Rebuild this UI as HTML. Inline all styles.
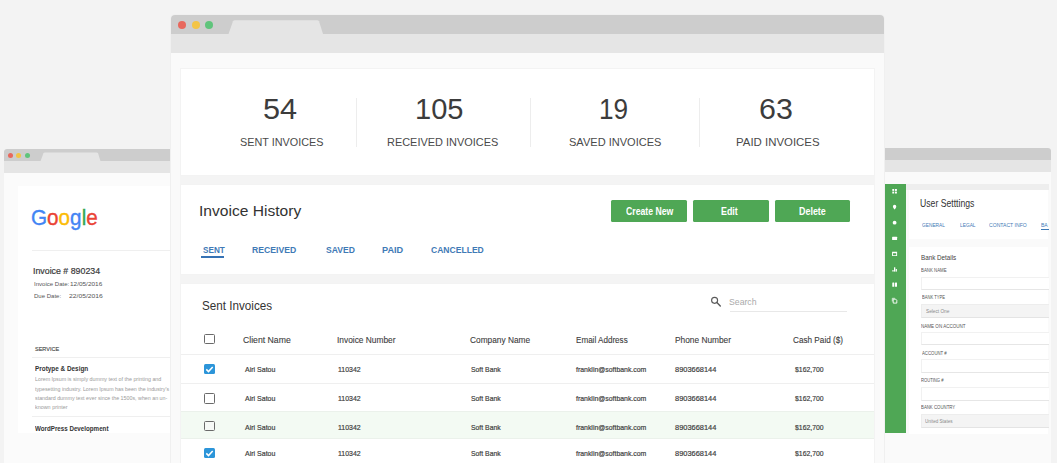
<!DOCTYPE html>
<html lang="en">
<head>
<meta charset="utf-8">
<title>Invoice History</title>
<style>
html,body{margin:0;padding:0}
body{width:1057px;height:463px;overflow:hidden;background:#f3f3f3;position:relative;font-family:"Liberation Sans",sans-serif}
div,span,svg{position:absolute;box-sizing:border-box}
i{font-style:normal}
.t{white-space:pre;line-height:1;transform-origin:0 0}
.win{overflow:hidden}
.bar1{left:0;top:0;width:100%;background:#cdcdcd}
.bar2{left:0;width:100%;background:#e5e5e5}
.card{background:#fff}
.dot{border-radius:50%}
.btn{background:#4fa755;border-radius:1.5px;height:21.3px;top:200.3px;width:75.5px}
.hr{height:1px;background:#efefef}
.cb{width:10.8px;height:10.4px;left:204.2px;border:1px solid #6a6a6a;border-radius:1.5px;background:#fff}
.cb.on{border:0;background:#2c95d9}
.cb svg{left:0;top:0}
.inp{left:920.5px;width:130px;height:13.5px;background:#fff;border:1px solid #f1f1f1;border-bottom-color:#e6e6e6;border-right:0}
.sel{background:#f4f4f4;border-color:#ededed;border-bottom-color:#e4e4e4}
</style>
</head>
<body>

<!-- left window : invoice document -->
<div class="win" style="left:4px;top:149px;width:166px;height:314px;background:#fbfbfb;border-radius:3px 0 0 0">
  <div class="bar1" style="height:12px"></div>
  <div class="bar2" style="top:12px;height:11.7px"></div>
  <svg style="left:0;top:0" width="167" height="13" viewBox="0 0 167 13"><path d="M36.5 12.2 L39.5 4 Q40 3.4 41 3.4 L92.5 3.4 Q93.5 3.4 94 4 L96.5 12.2 Z" fill="#e5e5e5"/></svg>
  <div class="dot" style="left:3.8px;top:3.8px;width:5px;height:5px;background:#e8685d"></div>
  <div class="dot" style="left:12.3px;top:3.8px;width:5px;height:5px;background:#f3c445"></div>
  <div class="dot" style="left:21px;top:3.8px;width:5px;height:5px;background:#5fc47b"></div>
  <div class="card" style="left:13.5px;top:37px;width:152.5px;height:247.3px"></div>
  <div class="hr" style="left:28px;top:101.2px;width:138px"></div>
  <div class="hr" style="left:28px;top:208px;width:138px"></div>
  <div class="hr" style="left:28px;top:267px;width:138px"></div>
</div>
<span class="t" style="left:31.25px;top:207.25px;font-size:21.2px;color:#4285f4;transform:scaleX(0.9760);-webkit-text-stroke:.35px;"><i style="color:#4285f4">G</i><i style="color:#ea4335">o</i><i style="color:#fbbc05">o</i><i style="color:#4285f4">g</i><i style="color:#34a853">l</i><i style="color:#ea4335">e</i></span>
<span class="t" style="left:33.00px;top:267.07px;font-size:8.9px;color:#3a3a3a;transform:scaleX(0.9925);-webkit-text-stroke:.2px #3a3a3a;">Invoice # 890234</span>
<span class="t" style="left:33.75px;top:280.95px;font-size:6.2px;color:#555;transform:scaleX(0.9743);">Invoice Date:</span>
<span class="t" style="left:70.00px;top:280.95px;font-size:6.2px;color:#555;transform:scaleX(1.0413);">12/05/2016</span>
<span class="t" style="left:33.75px;top:293.25px;font-size:6.2px;color:#555;transform:scaleX(0.9720);">Due Date:</span>
<span class="t" style="left:69.00px;top:293.25px;font-size:6.2px;color:#555;transform:scaleX(1.0909);">22/05/2016</span>
<span class="t" style="left:35.25px;top:345.64px;font-size:6.1px;color:#444;transform:scaleX(0.9067);-webkit-text-stroke:.15px #444;">SERVICE</span>
<span class="t" style="left:35.00px;top:364.57px;font-size:7.6px;color:#333;font-weight:700;transform:scaleX(0.8410);">Protype &amp; Design</span>
<span class="t" style="left:35.25px;top:376.83px;font-size:5.4px;color:#9a9a9a;transform:scaleX(0.9894);">Lorem Ipsum is simply dummy text of the printing and</span>
<span class="t" style="left:35.00px;top:387.33px;font-size:5.4px;color:#9a9a9a;transform:scaleX(0.9770);">typesetting industry. Lorem Ipsum has been the industry's</span>
<span class="t" style="left:35.25px;top:396.23px;font-size:5.4px;color:#9a9a9a;transform:scaleX(0.9854);">standard dummy text ever since the 1500s, when an un-</span>
<span class="t" style="left:35.25px;top:405.33px;font-size:5.4px;color:#9a9a9a;transform:scaleX(1.0032);">known printer</span>
<span class="t" style="left:35.25px;top:424.57px;font-size:7.6px;color:#333;font-weight:700;transform:scaleX(0.8184);">WordPress Development</span>

<!-- right window : user settings -->
<div class="win" style="left:885px;top:148px;width:166px;height:315px;background:#fafafa;border-radius:0 3px 0 0">
  <div class="bar1" style="height:12.2px"></div>
  <div class="bar2" style="top:12.2px;height:11.5px"></div>
  <div style="left:0;top:35.6px;width:20.5px;height:249.8px;background:#4fa755"></div>
  <div style="left:21px;top:36px;width:142.5px;height:6px;background:#eeeeee"></div>
  <div class="card" style="left:24.3px;top:42px;width:139.2px;height:48.8px"></div>
  <div class="card" style="left:24.3px;top:98.5px;width:139.2px;height:187.6px"></div>
</div>
<svg style="left:885px;top:184px" width="21" height="125" viewBox="0 0 21 125" fill="#fff">
  <!-- grid -->
  <rect x="7.3" y="5" width="1.9" height="1.9"/><rect x="10" y="5" width="1.9" height="1.9"/><rect x="7.3" y="7.6" width="1.9" height="1.9"/><rect x="10" y="7.6" width="1.9" height="1.9"/>
  <!-- pin -->
  <path d="M9.6 20.8 a1.7 1.7 0 0 1 1.7 1.7 c0 1.2 -1.7 3.1 -1.7 3.1 s-1.7 -1.9 -1.7 -3.1 a1.7 1.7 0 0 1 1.7 -1.7z"/>
  <!-- circle -->
  <circle cx="9.6" cy="38.7" r="1.9"/>
  <!-- card -->
  <rect x="7.1" y="52.8" width="5" height="3.3" rx=".5"/>
  <!-- calendar -->
  <path d="M7.1 67.7 h5 v4.3 h-5z M8 69.3 v1.9 h3.2 v-1.9z" fill-rule="evenodd"/>
  <!-- chart -->
  <rect x="7.4" y="86" width="1.2" height="1.6"/><rect x="9" y="83.3" width="1.3" height="4.3"/><rect x="10.7" y="85" width="1.2" height="2.6"/>
  <!-- book -->
  <rect x="7.3" y="98.6" width="2" height="4.2" rx=".4"/><rect x="10" y="98.6" width="2" height="4.2" rx=".4"/>
  <!-- copy -->
  <path d="M8.2 115.2 h2.6 l1 1 v2.9 h-3.6z" fill="none" stroke="#fff" stroke-width=".9"/><path d="M7.3 117.5 v-3.2 h2.6" fill="none" stroke="#fff" stroke-width=".7"/>
</svg>
<div style="left:0;top:0;width:1048.5px;height:463px;overflow:hidden">
<div class="inp" style="top:276.7px"></div>
<div class="inp sel" style="top:304.3px"></div>
<div class="inp" style="top:331.6px"></div>
<div class="inp" style="top:359.3px"></div>
<div class="inp" style="top:387px"></div>
<div class="inp sel" style="top:414px"></div>
<div style="left:1041.3px;top:229px;width:10px;height:1.2px;background:#3b78b5"></div>
<span class="t" style="left:919.50px;top:198.33px;font-size:10.6px;color:#333;transform:scaleX(0.8176);">User Setttings</span>
<span class="t" style="left:921.50px;top:223.30px;font-size:5.2px;color:#3f7ab6;transform:scaleX(0.9238);">GENERAL</span>
<span class="t" style="left:959.75px;top:223.30px;font-size:5.2px;color:#3f7ab6;transform:scaleX(0.9294);">LEGAL</span>
<span class="t" style="left:989.25px;top:223.30px;font-size:5.2px;color:#3f7ab6;transform:scaleX(0.9816);">CONTACT INFO</span>
<span class="t" style="left:1041.25px;top:223.30px;font-size:5.2px;color:#3f7ab6;transform:scaleX(0.9699);">BA</span>
<span class="t" style="left:921.25px;top:253.72px;font-size:7.3px;color:#444;transform:scaleX(0.8600);">Bank Details</span>
<span class="t" style="left:921.25px;top:268.94px;font-size:4.8px;color:#555;transform:scaleX(0.9037);">BANK NAME</span>
<span class="t" style="left:921.50px;top:296.34px;font-size:4.8px;color:#555;transform:scaleX(0.8553);">BANK TYPE</span>
<span class="t" style="left:926.00px;top:308.68px;font-size:5.1px;color:#8a8a8a;transform:scaleX(0.9273);">Select One</span>
<span class="t" style="left:921.25px;top:325.44px;font-size:4.8px;color:#555;transform:scaleX(0.9462);">NAME ON ACCOUNT</span>
<span class="t" style="left:921.50px;top:352.04px;font-size:4.8px;color:#555;transform:scaleX(0.8946);">ACCOUNT #</span>
<span class="t" style="left:921.25px;top:379.44px;font-size:4.8px;color:#555;transform:scaleX(0.8622);">ROUTING #</span>
<span class="t" style="left:921.25px;top:406.04px;font-size:4.8px;color:#555;transform:scaleX(0.8993);">BANK COUNTRY</span>
<span class="t" style="left:925.00px;top:419.38px;font-size:5.1px;color:#8a8a8a;transform:scaleX(0.9000);">United States</span>
</div>

<!-- main window : invoice history -->
<div class="win" style="left:171px;top:15px;width:713px;height:448px;background:#fafafa;border-radius:4px 4px 0 0;box-shadow:0 0 2px rgba(0,0,0,.05)">
  <div class="bar1" style="height:18.7px"></div>
  <div class="bar2" style="top:18.7px;height:19px"></div>
  <svg style="left:0;top:0" width="713" height="20" viewBox="0 0 713 20"><path d="M57.5 19 L62 6.3 Q62.5 5.3 64 5.3 L146 5.3 Q147.5 5.3 148 6.3 L152 19 Z" fill="#e5e5e5"/></svg>
  <div class="dot" style="left:6.6px;top:5.8px;width:8px;height:8px;background:#e8685d"></div>
  <div class="dot" style="left:20.7px;top:5.8px;width:8px;height:8px;background:#f3c445"></div>
  <div class="dot" style="left:34.3px;top:5.8px;width:8px;height:8px;background:#5fc47b"></div>
  <div style="left:8.7px;top:150px;width:695.5px;height:120px;background:#f4f4f4"></div>
  <div class="card" style="left:8.7px;top:52.5px;width:695.5px;height:108.5px;border:1px solid #f3f3f3"></div>
  <div class="card" style="left:8.7px;top:169.3px;width:695.5px;height:91px;border:1px solid #f3f3f3"></div>
  <div class="card" style="left:8.7px;top:268px;width:695.5px;height:190px;border:1px solid #f3f3f3"></div>
</div>
<!-- stats dividers -->
<div style="left:356.3px;top:97.5px;width:1px;height:49px;background:#ededed"></div>
<div style="left:529.5px;top:97.5px;width:1px;height:49px;background:#ededed"></div>
<div style="left:699px;top:97.5px;width:1px;height:49px;background:#ededed"></div>
<!-- buttons -->
<div class="btn" style="left:611px"></div>
<div class="btn" style="left:693px"></div>
<div class="btn" style="left:774.6px"></div>
<!-- active tab underline -->
<div style="left:201.2px;top:256px;width:22.8px;height:2.2px;background:#3672b4"></div>
<!-- search -->
<svg style="left:709px;top:295px" width="14" height="14" viewBox="0 0 14 14"><circle cx="5.6" cy="5.3" r="3" fill="none" stroke="#5a5a5a" stroke-width="1.15"/><path d="M7.9 7.6 L11.3 11" stroke="#5a5a5a" stroke-width="1.4" stroke-linecap="round"/></svg>
<div class="hr" style="left:729.5px;top:310.6px;width:117px;background:#e8e8e8"></div>
<!-- table -->
<div style="left:180.5px;top:411.4px;width:693.5px;height:26.8px;background:#f3faf3"></div>
<div class="hr" style="left:180.5px;top:354.2px;width:693.5px"></div>
<div class="hr" style="left:180.5px;top:383px;width:693.5px"></div>
<div class="hr" style="left:180.5px;top:411px;width:693.5px;background:#ebf1eb"></div>
<div class="hr" style="left:180.5px;top:438.2px;width:693.5px;background:#ebf1eb"></div>
<div class="cb" style="top:333.9px"></div>
<div class="cb on" style="top:364px"><svg width="11" height="11" viewBox="0 0 11 11"><path d="M2.3 5.4 L4.5 7.6 L8.7 3" fill="none" stroke="#fff" stroke-width="1.5"/></svg></div>
<div class="cb" style="top:393.4px"></div>
<div class="cb" style="top:420.5px;background:#f6f9f6"></div>
<div class="cb on" style="top:447.5px"><svg width="11" height="11" viewBox="0 0 11 11"><path d="M2.3 5.4 L4.5 7.6 L8.7 3" fill="none" stroke="#fff" stroke-width="1.5"/></svg></div>

<!-- text -->
<span class="t" style="left:263.00px;top:94.04px;font-size:30.2px;color:#3c3c3c;transform:scaleX(1.0159);">54</span>
<span class="t" style="left:415.00px;top:94.04px;font-size:30.2px;color:#3c3c3c;transform:scaleX(0.9626);">105</span>
<span class="t" style="left:598.75px;top:94.04px;font-size:30.2px;color:#3c3c3c;transform:scaleX(0.8667);">19</span>
<span class="t" style="left:759.00px;top:94.04px;font-size:30.2px;color:#3c3c3c;transform:scaleX(1.0081);">63</span>
<span class="t" style="left:240.00px;top:137.16px;font-size:10.8px;color:#4a4a4a;transform:scaleX(1.0030);">SENT INVOICES</span>
<span class="t" style="left:387.00px;top:137.16px;font-size:10.8px;color:#4a4a4a;transform:scaleX(1.0138);">RECEIVED INVOICES</span>
<span class="t" style="left:569.00px;top:137.16px;font-size:10.8px;color:#4a4a4a;transform:scaleX(1.0223);">SAVED INVOICES</span>
<span class="t" style="left:736.00px;top:137.16px;font-size:10.8px;color:#4a4a4a;transform:scaleX(1.0581);">PAID INVOICES</span>
<span class="t" style="left:199.00px;top:202.83px;font-size:15.2px;color:#333;transform:scaleX(1.0260);">Invoice History</span>
<span class="t" style="left:202.50px;top:246.11px;font-size:9.2px;color:#3f7ab6;font-weight:700;transform:scaleX(0.8896);">SENT</span>
<span class="t" style="left:252.00px;top:246.11px;font-size:9.2px;color:#3f7ab6;font-weight:700;transform:scaleX(0.9424);">RECEIVED</span>
<span class="t" style="left:325.75px;top:246.11px;font-size:9.2px;color:#3f7ab6;font-weight:700;transform:scaleX(0.9323);">SAVED</span>
<span class="t" style="left:381.75px;top:246.11px;font-size:9.2px;color:#3f7ab6;font-weight:700;transform:scaleX(0.9951);">PAID</span>
<span class="t" style="left:430.75px;top:246.11px;font-size:9.2px;color:#3f7ab6;font-weight:700;transform:scaleX(0.9313);">CANCELLED</span>
<span class="t" style="left:626.00px;top:206.90px;font-size:10.4px;color:#fff;font-weight:700;transform:scaleX(0.8348);">Create New</span>
<span class="t" style="left:721.25px;top:206.90px;font-size:10.4px;color:#fff;font-weight:700;transform:scaleX(0.8533);">Edit</span>
<span class="t" style="left:799.00px;top:206.90px;font-size:10.4px;color:#fff;font-weight:700;transform:scaleX(0.8584);">Delete</span>
<span class="t" style="left:202.00px;top:299.83px;font-size:12.6px;color:#333;transform:scaleX(0.9268);">Sent Invoices</span>
<span class="t" style="left:729.00px;top:296.57px;font-size:9.6px;color:#aaa;transform:scaleX(0.9060);">Search</span>
<span class="t" style="left:243.25px;top:335.42px;font-size:9.9px;color:#3c3c3c;transform:scaleX(0.8785);-webkit-text-stroke:.12px;">Client Name</span>
<span class="t" style="left:336.75px;top:335.42px;font-size:9.9px;color:#3c3c3c;transform:scaleX(0.8454);-webkit-text-stroke:.12px;">Invoice Number</span>
<span class="t" style="left:470.25px;top:335.42px;font-size:9.9px;color:#3c3c3c;transform:scaleX(0.8418);-webkit-text-stroke:.12px;">Company Name</span>
<span class="t" style="left:575.75px;top:335.42px;font-size:9.9px;color:#3c3c3c;transform:scaleX(0.8186);-webkit-text-stroke:.12px;">Email Address</span>
<span class="t" style="left:675.00px;top:335.42px;font-size:9.9px;color:#3c3c3c;transform:scaleX(0.8435);-webkit-text-stroke:.12px;">Phone Number</span>
<span class="t" style="left:793.00px;top:335.42px;font-size:9.9px;color:#3c3c3c;transform:scaleX(0.8286);-webkit-text-stroke:.12px;">Cash Paid ($)</span>
<span class="t" style="left:245.25px;top:365.51px;font-size:7.9px;color:#404040;transform:scaleX(0.8889);-webkit-text-stroke:.2px;">Airi Satou</span>
<span class="t" style="left:338.00px;top:365.51px;font-size:7.9px;color:#404040;transform:scaleX(0.8800);-webkit-text-stroke:.2px;">110342</span>
<span class="t" style="left:471.00px;top:365.51px;font-size:7.9px;color:#404040;transform:scaleX(0.8676);-webkit-text-stroke:.2px;">Soft Bank</span>
<span class="t" style="left:576.25px;top:365.51px;font-size:7.9px;color:#404040;transform:scaleX(0.8750);-webkit-text-stroke:.2px;">franklin@softbank.com</span>
<span class="t" style="left:675.25px;top:365.51px;font-size:7.9px;color:#404040;transform:scaleX(0.9425);-webkit-text-stroke:.2px;">8903668144</span>
<span class="t" style="left:795.00px;top:365.51px;font-size:7.9px;color:#404040;transform:scaleX(0.8693);-webkit-text-stroke:.2px;">$162,700</span>
<span class="t" style="left:245.25px;top:394.51px;font-size:7.9px;color:#404040;transform:scaleX(0.8889);-webkit-text-stroke:.2px;">Airi Satou</span>
<span class="t" style="left:338.00px;top:394.51px;font-size:7.9px;color:#404040;transform:scaleX(0.8800);-webkit-text-stroke:.2px;">110342</span>
<span class="t" style="left:471.00px;top:394.51px;font-size:7.9px;color:#404040;transform:scaleX(0.8676);-webkit-text-stroke:.2px;">Soft Bank</span>
<span class="t" style="left:576.25px;top:394.51px;font-size:7.9px;color:#404040;transform:scaleX(0.8750);-webkit-text-stroke:.2px;">franklin@softbank.com</span>
<span class="t" style="left:675.25px;top:394.51px;font-size:7.9px;color:#404040;transform:scaleX(0.9425);-webkit-text-stroke:.2px;">8903668144</span>
<span class="t" style="left:795.00px;top:394.51px;font-size:7.9px;color:#404040;transform:scaleX(0.8693);-webkit-text-stroke:.2px;">$162,700</span>
<span class="t" style="left:245.25px;top:423.91px;font-size:7.9px;color:#404040;transform:scaleX(0.8889);-webkit-text-stroke:.2px;">Airi Satou</span>
<span class="t" style="left:338.00px;top:423.91px;font-size:7.9px;color:#404040;transform:scaleX(0.8800);-webkit-text-stroke:.2px;">110342</span>
<span class="t" style="left:471.00px;top:423.91px;font-size:7.9px;color:#404040;transform:scaleX(0.8676);-webkit-text-stroke:.2px;">Soft Bank</span>
<span class="t" style="left:576.25px;top:423.91px;font-size:7.9px;color:#404040;transform:scaleX(0.8750);-webkit-text-stroke:.2px;">franklin@softbank.com</span>
<span class="t" style="left:675.25px;top:423.91px;font-size:7.9px;color:#404040;transform:scaleX(0.9425);-webkit-text-stroke:.2px;">8903668144</span>
<span class="t" style="left:795.00px;top:423.91px;font-size:7.9px;color:#404040;transform:scaleX(0.8693);-webkit-text-stroke:.2px;">$162,700</span>
<span class="t" style="left:245.25px;top:450.21px;font-size:7.9px;color:#404040;transform:scaleX(0.8889);-webkit-text-stroke:.2px;">Airi Satou</span>
<span class="t" style="left:338.00px;top:450.21px;font-size:7.9px;color:#404040;transform:scaleX(0.8800);-webkit-text-stroke:.2px;">110342</span>
<span class="t" style="left:471.00px;top:450.21px;font-size:7.9px;color:#404040;transform:scaleX(0.8676);-webkit-text-stroke:.2px;">Soft Bank</span>
<span class="t" style="left:576.25px;top:450.21px;font-size:7.9px;color:#404040;transform:scaleX(0.8750);-webkit-text-stroke:.2px;">franklin@softbank.com</span>
<span class="t" style="left:675.25px;top:450.21px;font-size:7.9px;color:#404040;transform:scaleX(0.9425);-webkit-text-stroke:.2px;">8903668144</span>
<span class="t" style="left:795.00px;top:450.21px;font-size:7.9px;color:#404040;transform:scaleX(0.8693);-webkit-text-stroke:.2px;">$162,700</span>
</body>
</html>
